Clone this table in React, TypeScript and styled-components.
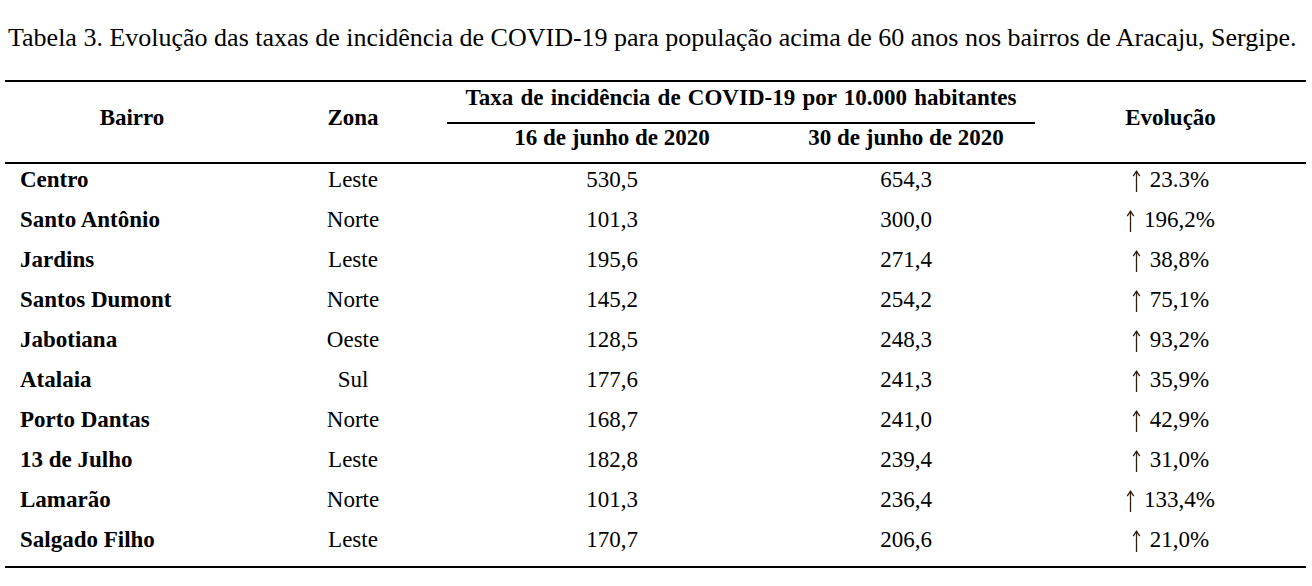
import styled, { createGlobalStyle } from "styled-components";

const GlobalStyle = createGlobalStyle`
    body {
        margin: 0;
        background: #ffffff;
        color: #000000;
        font-family: "Liberation Serif", "Times New Roman", serif;
    }
`;

const Page = styled.div`
    width: 1312px;
    height: 586px;
    background: #ffffff;
    overflow: hidden;
`;

const Caption = styled.p`
    margin: 0;
    padding: 23px 0 0 8px;
    font-size: 26px;
    line-height: 30px;
    white-space: nowrap;
`;

const Table = styled.table`
    margin: 27px 0 0 5px;
    width: 1301px;
    table-layout: fixed;
    border-collapse: separate;
    border-spacing: 0;
    font-size: 23px;
    line-height: 28px;
`;

const HeadCell = styled.th`
    padding: 0 0 9px;
    font-weight: 700;
    text-align: center;
    vertical-align: middle;
    white-space: nowrap;
    border-top: 2px solid #000;
    border-bottom: 2px solid #000;
`;

const SpanHead = styled.th`
    padding: 2px 0 10px;
    font-weight: 700;
    text-align: center;
    vertical-align: top;
    white-space: nowrap;
    word-spacing: 1.5px;
    border-top: 2px solid #000;
    border-bottom: 2px solid #000;
`;

const SubHead = styled.th`
    padding: 0 0 10px;
    font-weight: 700;
    text-align: center;
    vertical-align: top;
    white-space: nowrap;
    border-bottom: 2px solid #000;
`;

const Cell = styled.td<{ $name?: boolean; $last?: boolean }>`
    padding: ${({ $name, $last }) => `2px 0 ${$last ? 12 : 10}px ${$name ? 15 : 0}px`};
    font-weight: ${({ $name }) => ($name ? 700 : 400)};
    text-align: ${({ $name }) => ($name ? "left" : "center")};
    vertical-align: top;
    white-space: nowrap;
    border-bottom: ${({ $last }) => ($last ? "2px solid #000" : "none")};
`;

const ArrowIcon = styled.svg`
    width: 9px;
    height: 22px;
    margin-right: 9px;
    vertical-align: -5px;
`;

const UpArrow = () => (
    <ArrowIcon viewBox="0 0 9 22" fill="none" stroke="#2e1d0c" strokeWidth="1.3">
        <path d="M4.5 1.5 V22" />
        <path d="M1.2 6.2 L4.5 1.2 L7.8 6.2" strokeLinejoin="miter" />
    </ArrowIcon>
);

type Row = { bairro: string; zona: string; jun16: string; jun30: string; evolucao: string };

const rows: Row[] = [
    { bairro: "Centro", zona: "Leste", jun16: "530,5", jun30: "654,3", evolucao: "23.3%" },
    { bairro: "Santo Antônio", zona: "Norte", jun16: "101,3", jun30: "300,0", evolucao: "196,2%" },
    { bairro: "Jardins", zona: "Leste", jun16: "195,6", jun30: "271,4", evolucao: "38,8%" },
    { bairro: "Santos Dumont", zona: "Norte", jun16: "145,2", jun30: "254,2", evolucao: "75,1%" },
    { bairro: "Jabotiana", zona: "Oeste", jun16: "128,5", jun30: "248,3", evolucao: "93,2%" },
    { bairro: "Atalaia", zona: "Sul", jun16: "177,6", jun30: "241,3", evolucao: "35,9%" },
    { bairro: "Porto Dantas", zona: "Norte", jun16: "168,7", jun30: "241,0", evolucao: "42,9%" },
    { bairro: "13 de Julho", zona: "Leste", jun16: "182,8", jun30: "239,4", evolucao: "31,0%" },
    { bairro: "Lamarão", zona: "Norte", jun16: "101,3", jun30: "236,4", evolucao: "133,4%" },
    { bairro: "Salgado Filho", zona: "Leste", jun16: "170,7", jun30: "206,6", evolucao: "21,0%" },
];

const App = () => {
    return (
        <Page>
            <GlobalStyle />
            <Caption>
                Tabela 3. Evolução das taxas de incidência de COVID-19 para população acima de 60 anos nos
                bairros de Aracaju, Sergipe.
            </Caption>
            <Table>
                <colgroup>
                    <col style={{ width: 254 }} />
                    <col style={{ width: 188 }} />
                    <col style={{ width: 330 }} />
                    <col style={{ width: 258 }} />
                    <col style={{ width: 271 }} />
                </colgroup>
                <thead>
                    <tr>
                        <HeadCell rowSpan={2}>Bairro</HeadCell>
                        <HeadCell rowSpan={2}>Zona</HeadCell>
                        <SpanHead colSpan={2}>Taxa de incidência de COVID-19 por 10.000 habitantes</SpanHead>
                        <HeadCell rowSpan={2}>Evolução</HeadCell>
                    </tr>
                    <tr>
                        <SubHead>16 de junho de 2020</SubHead>
                        <SubHead>30 de junho de 2020</SubHead>
                    </tr>
                </thead>
                <tbody>
                    {rows.map((r, i) => {
                        const last = i === rows.length - 1;
                        return (
                            <tr key={r.bairro}>
                                <Cell $name $last={last}>
                                    {r.bairro}
                                </Cell>
                                <Cell $last={last}>{r.zona}</Cell>
                                <Cell $last={last}>{r.jun16}</Cell>
                                <Cell $last={last}>{r.jun30}</Cell>
                                <Cell $last={last}>
                                    <UpArrow />
                                    {r.evolucao}
                                </Cell>
                            </tr>
                        );
                    })}
                </tbody>
            </Table>
        </Page>
    );
};

export default App;
